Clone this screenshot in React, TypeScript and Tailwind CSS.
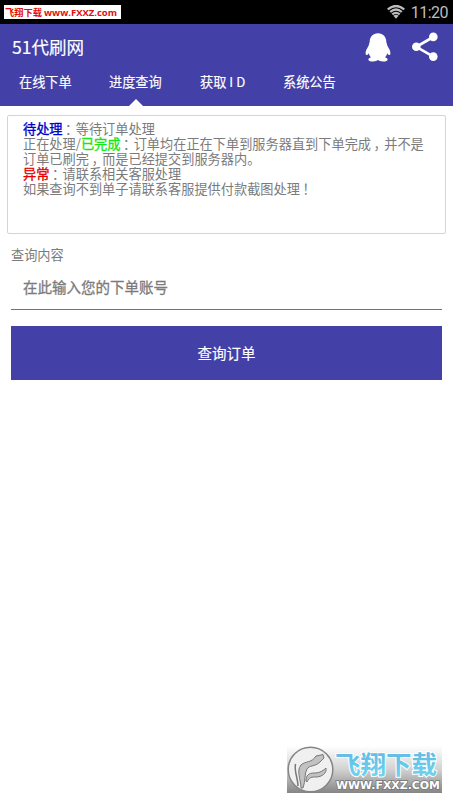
import type { ReactNode } from "react";

type Tab = {
  label: string;
  width: string;
};

const tabs: Tab[] = [
  { label: "在线下单", width: "w-[90px]" },
  { label: "进度查询", width: "w-[91px]" },
  { label: "获取 I D", width: "w-[83px]" },
  { label: "系统公告", width: "w-[89px]" },
];

// Centres full-width punctuation in a one-character cell
const Punct = ({ children }: { children: ReactNode }) => (
  <span className="inline-block w-[13.2px] whitespace-nowrap pl-[2.5px] leading-[15px]">
    {children}
  </span>
);

const WifiIcon = () => (
  <svg width="18" height="14" viewBox="0 0 18 14" fill="none" stroke="#bdbdbd">
    <path d="M0.8 4.3 Q9 -2.3 17.2 4.3" strokeWidth="2.3" />
    <path d="M3.2 7 Q9 2 14.8 7" strokeWidth="2.3" />
    <path d="M5.3 9.4 Q9 6.2 12.7 9.4" strokeWidth="2.2" />
    <path d="M6.4 10.8 Q9 8.6 11.6 10.8 L9 13.7 Z" fill="#bdbdbd" stroke="none" />
  </svg>
);

const QQIcon = () => (
  <svg width="26" height="29" viewBox="0 0 26 29" fill="#fff">
    <path d="M13 0.3 C7.8 0.3 4.8 4 4.7 8.8 C4.7 10 4 10.4 3.9 11.8 C3.8 13 2.5 14.5 1.4 16.8 C0.3 19.2 0.3 21.7 1.4 22.1 C2.2 22.3 3.2 21.2 3.8 20.2 C4.2 22 4.9 23.3 6 24.3 C4.5 24.8 3.4 25.5 3.4 26.5 C3.4 28 5.5 28.6 8 28.5 C10.4 28.4 12 27.9 13 27 C14 27.9 15.6 28.4 18 28.5 C20.5 28.6 22.6 28 22.6 26.5 C22.6 25.5 21.5 24.8 20 24.3 C21.1 23.3 21.8 22 22.2 20.2 C22.8 21.2 23.8 22.3 24.6 22.1 C25.7 21.7 25.7 19.2 24.6 16.8 C23.5 14.5 22.2 13 22.1 11.8 C22 10.4 21.3 10 21.3 8.8 C21.2 4 18.2 0.3 13 0.3 Z" />
  </svg>
);

const ShareIcon = () => (
  <svg width="26" height="30" viewBox="0 0 26 30" fill="#fff">
    <path d="M21.3 5 L4.3 14.8 L21.3 24.6" fill="none" stroke="#fff" strokeWidth="2.7" />
    <circle cx="21.3" cy="4.9" r="4.3" />
    <circle cx="4.3" cy="14.8" r="4.3" />
    <circle cx="21.3" cy="24.6" r="4.3" />
  </svg>
);

const StatusBar = () => (
  <div className="flex h-6 items-center justify-between bg-black pl-1 pr-[5px]">
    <div className="flex h-[14px] w-[117px] items-center bg-white pl-px">
      <svg width="116" height="14" fill="#e00d0d" fontWeight="bold">
        <text x="0" y="10.5" fontSize="9" textLength="37" lengthAdjust="spacingAndGlyphs" fontFamily="Noto Sans CJK SC">
          飞翔下载
        </text>
        <text x="39" y="10.5" fontSize="9" textLength="73" lengthAdjust="spacingAndGlyphs" fontFamily="Open Sans">
          www.FXXZ.com
        </text>
      </svg>
    </div>
    <div className="flex items-center gap-[6px]">
      <WifiIcon />
      <span className="pt-[2px] font-['Roboto',sans-serif] text-[16px] leading-[22px] text-[#bdbdbd] [letter-spacing:-0.5px]">
        11:20
      </span>
    </div>
  </div>
);

const Header = () => (
  <header className="h-[82px] bg-[#4340a8] text-white">
    <div className="flex h-[46px] items-center justify-between pl-[12px] pr-[15px]">
      <h1 className="text-[17.5px] leading-6 [-webkit-text-stroke:0.15px]">51代刷网</h1>
      <div className="flex items-center gap-[21px]">
        <QQIcon />
        <ShareIcon />
      </div>
    </div>
    <nav className="flex h-9 pl-[19px] text-[13.2px] [-webkit-text-stroke:0.15px]">
      {tabs.map((tab, i) => (
        <div key={tab.label} className={`flex flex-col justify-between ${tab.width}`}>
          <span className="whitespace-nowrap leading-6">{tab.label}</span>
          {i === 1 && (
            <svg className="ml-[20px]" width="14" height="7" fill="#fff">
              <path d="M0 7 L7 0 L14 7 Z" />
            </svg>
          )}
        </div>
      ))}
    </nav>
  </header>
);

const Notice = () => (
  <section className="mx-[7px] mt-[9px] h-[119px] rounded-[2px] border border-[#d4d4d4] pl-[15px] pt-[5px] text-[13.2px] leading-[15px] text-[#7b7b7b]">
    <p>
      <span className="text-[#0000c8] [-webkit-text-stroke:0.35px]">待处理</span>
      <Punct>：</Punct>等待订单处理
    </p>
    <p className="whitespace-nowrap">
      正在处理/<span className="text-[#19e619] [-webkit-text-stroke:0.35px]">已完成</span>
      <Punct>：</Punct>订单均在正在下单到服务器直到下单完成<Punct>，</Punct>并不是
    </p>
    <p>
      订单已刷完<Punct>，</Punct>而是已经提交到服务器内。
    </p>
    <p>
      <span className="text-[#e60000] [-webkit-text-stroke:0.35px]">异常</span>
      <Punct>：</Punct>请联系相关客服处理
    </p>
    <p>
      如果查询不到单子请联系客服提供付款截图处理<Punct>！</Punct>
    </p>
  </section>
);

const Watermark = () => (
  <svg className="absolute left-[287px] top-[746px]" width="155" height="47" viewBox="0 0 155 47">
    <defs>
      <linearGradient id="fade" x1="0" y1="0" x2="0" y2="1">
        <stop offset="0" stopColor="#fff" />
        <stop offset="0.5" stopColor="#d2d2d2" />
        <stop offset="1" stopColor="#858585" />
      </linearGradient>
      <linearGradient id="sky" x1="0" y1="0" x2="0" y2="1">
        <stop offset="0" stopColor="#5fb4e0" />
        <stop offset="1" stopColor="#6fd8f2" />
      </linearGradient>
    </defs>
    <rect width="155" height="47" fill="url(#fade)" />
    <circle cx="23.5" cy="23.5" r="22.3" fill="#f0f0f0" stroke="#858585" strokeWidth="1.5" />
    <g fill="#c2c2c2" stroke="#777" strokeWidth="1" strokeLinejoin="round">
      <path d="M14 42 C14 34 9 25 14 19 C18 15 25 17 29 10 L36 8.5 L37 12 L33 16 C28 21 22 19 20 23 C17 28 19 34 16 42 Z" />
      <path d="M19 35 C19 29 22 27 27 27 C31 27 35 26 39 22 C40 27 35 31 29 31 C25 31 22 31 20 36 Z" />
    </g>
    <path d="M8.5 18 C7 26 11 32 11 40" fill="none" stroke="#777" strokeWidth="1.5" />
    <text
      x="48"
      y="28"
      fontFamily="Noto Sans CJK SC, sans-serif"
      fontSize="25"
      fontWeight="bold"
      fill="url(#sky)"
      stroke="#fff"
      strokeWidth="2"
      paintOrder="stroke"
      textLength="102"
      lengthAdjust="spacingAndGlyphs"
    >
      飞翔下载
    </text>
    <text
      x="49"
      y="43"
      fontFamily="DejaVu Sans, sans-serif"
      fontSize="10"
      fontWeight="bold"
      fill="#fff"
      stroke="#777"
      strokeWidth="1.5"
      paintOrder="stroke"
      textLength="104"
      lengthAdjust="spacingAndGlyphs"
    >
      WWW.FXXZ.COM
    </text>
  </svg>
);

export default function App() {
  return (
    <div className="relative h-[805px] w-[453px] overflow-hidden bg-white font-['Noto_Sans_CJK_SC',sans-serif]">
      <StatusBar />
      <Header />
      <Notice />
      <main className="px-[11px]">
        <label htmlFor="account" className="mt-[11px] block text-[13.2px] leading-5 text-[#7b7b7b]">
          查询内容
        </label>
        <input
          id="account"
          className="mt-[3px] block h-[36px] w-full pl-[12px] text-[14.5px] outline-none placeholder:text-[#7b7b7b] placeholder:opacity-100 [-webkit-text-stroke:0.3px]"
          placeholder="在此输入您的下单账号"
        />
        <div className="mt-[5px] h-px bg-[#2590a8]" />
        <button className="mt-4 block h-[54px] w-[431px] bg-[#4340a8] text-[14.5px] text-white [-webkit-text-stroke:0.15px]">
          查询订单
        </button>
      </main>
      <Watermark />
    </div>
  );
}
